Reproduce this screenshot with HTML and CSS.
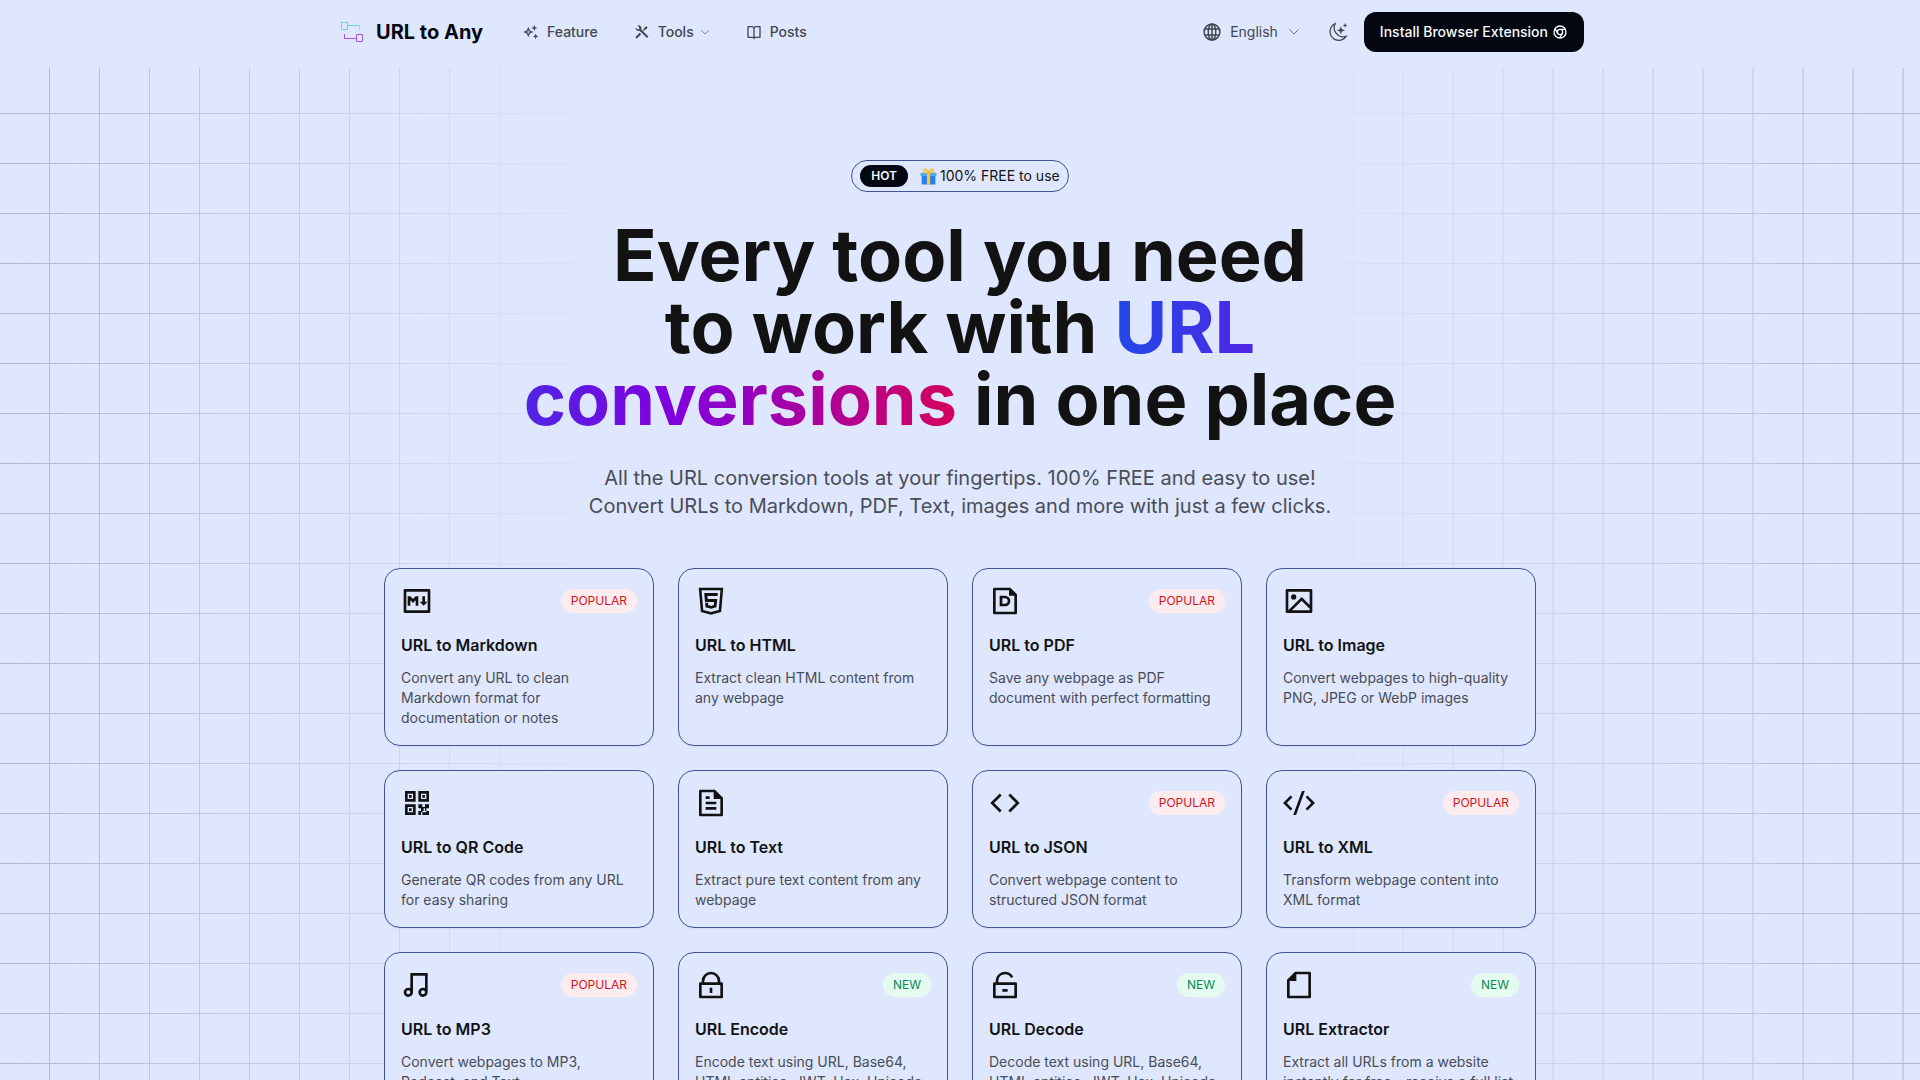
FILE: index.html
```html
<!DOCTYPE html>
<html lang="en">

<head>
    <meta charset="UTF-8">
    <meta name="viewport" content="width=device-width, initial-scale=1.0">
    <title>URL to Any</title>
    <link rel="stylesheet" href="styles.css">
</head>

<body>
    <header class="header">
        <div class="header-inner">
            <a class="brand" href="#">
                <svg class="logo" viewBox="0 0 24 24">
                    <path stroke="#5fdcd3" d="M1.500 2.500h6v7h-6z" />
                    <path stroke="#5fdcd3" d="M7.500 5.500h12" />
                    <path stroke="#8fe3e4" d="M19.500 5.500v5" />
                    <path stroke="#a855d8" d="M16.500 14.500h6v7h-6z" />
                    <path stroke="#a855d8" d="M16.500 18.500h-12v-4.500" />
                </svg>
                <span>URL to Any</span>
            </a>
            <nav class="nav">
                <a href="#feature">
                    <svg viewBox="0 0 24 24"><path d="M17 1.2 18.300 4.700 21.800 6 18.300 7.300 17 10.800 15.700 7.300 12.200 6 15.700 4.700zM19 14.200l1.200 3.100 3.100 1.200-3.100 1.200-1.200 3.100-1.200-3.100-3.100-1.200 3.100-1.200z" /><path fill-rule="evenodd" d="M8 4l2.300 5.700L16 12l-5.700 2.300L8 20l-2.300-5.700L0 12l5.700-2.300zM8 9.200 7.200 11.200 5.200 12l2 .8.8 2 .8-2 2-.8-2-.8z" /></svg>
                    <span>Feature</span>
                </a>
                <button type="button">
                    <svg viewBox="0 0 24 24"><path d="M5.300 2.300a4.500 4.500 0 0 1 5.700 5.900l10.700 10.700-2 2L8.200 10.200a4.500 4.500 0 0 1-5.900-4.900L4.600 7.600A2 2 0 1 0 7.500 4.700zM15.700 5.200l3.200-1.800 1.400 1.400-1.800 3.200-1.700.4-2.200 2.100-1.400-1.400 2.100-2.200zM8.600 13.300l2.100 2.100-5.600 5.600a1.500 1.500 0 0 1-2.200-2.100z" /></svg>
                    <span>Tools</span>
                    <svg class="chevron" viewBox="0 0 24 24"><path d="m3 8 9 8.500L21 8" /></svg>
                </button>
                <a href="#posts">
                    <svg viewBox="0 0 24 24"><path d="M13 21v2h-2v-2H3a1 1 0 0 1-1-1V4a1 1 0 0 1 1-1h6a4 4 0 0 1 3 1.350A4 4 0 0 1 15 3h6a1 1 0 0 1 1 1v16a1 1 0 0 1-1 1zm7-2V5h-5a2 2 0 0 0-2 2v12zm-9 0V7a2 2 0 0 0-2-2H4v14z" /></svg>
                    <span>Posts</span>
                </a>
            </nav>
            <div class="actions">
                <button class="language" type="button">
                    <svg class="globe" viewBox="0 0 24 24"><circle cx="12" cy="12" r="9.500" /><ellipse cx="12" cy="12" rx="4.500" ry="9.500" /><path d="M3.500 8.500h17M3.500 15.500h17M12 2.500v19" /></svg>
                    <span>English</span>
                    <svg class="chevron" viewBox="0 0 24 24"><path d="m3 7 9 9 9-9" /></svg>
                </button>
                <button class="theme" type="button" aria-label="Toggle theme">
                    <svg viewBox="0 0 24 24"><path class="moon" d="M8.500 2A10.500 10.500 0 1 0 21.800 17.200 11 11 0 0 1 8.500 2z" /><path d="M15.500 5l1.300 3.700 3.700 1.300-3.700 1.300-1.300 3.700-1.300-3.700-3.700-1.300 3.700-1.300zM20.500.8l.8 2.400 2.400.8-2.400.8-.8 2.400-.8-2.400-2.400-.8 2.400-.8z" /></svg>
                </button>
                <a class="install" href="#install">
                    <span>Install Browser Extension</span>
                    <svg viewBox="0 0 24 24"><circle cx="12" cy="12" r="9" /><circle cx="12" cy="12" r="4" /><path d="M12 8h8M8.500 14 4.500 7M15.500 14l-4 7" /></svg>
                </a>
            </div>
        </div>
    </header>

    <main class="main">
        <section class="hero">
            <a class="announcement" href="#free">
                <span class="hot">HOT</span>
                <span class="free">
                    <svg class="gift" viewBox="0 0 16 16">
                        <path fill="#2b7fe8" d="M1.500 6.500h13v9h-13z" />
                        <path fill="#50a8f5" d="M.5 4.500h15v3H.5z" />
                        <path fill="#fbc52d" d="M6.500 4.500h3v11h-3z" />
                        <path fill="none" stroke="#f9bd25" stroke-width="1.500" d="M8 4.500C6 0 3 .5 3.500 3c.3 1.500 3 1.500 4.500 1.500 1.500 0 4.200 0 4.500-1.500C13 .5 10 0 8 4.500z" />
                    </svg>
                    <span>100% FREE to use</span>
                </span>
            </a>
            <h1>Every tool you need<br>to work with <span class="highlight">URL conversions</span> in one place</h1>
            <p>All the URL conversion tools at your fingertips. 100% FREE and easy to use!<br>Convert URLs to Markdown, PDF, Text, images and more with just a few clicks.</p>
        </section>

        <section class="tools">
            <a class="card" href="#markdown">
                <div class="card-top">
                    <svg viewBox="0 0 24 24"><path d="M3 3h18a1 1 0 0 1 1 1v16a1 1 0 0 1-1 1H3a1 1 0 0 1-1-1V4a1 1 0 0 1 1-1zm1 2v14h16V5zm3 10.500H5v-7h2l2 2 2-2h2v7h-2v-4l-2 2-2-2zm11-3h2l-3 3-3-3h2v-4h2z" /></svg>
                    <span class="badge popular">POPULAR</span>
                </div>
                <h2>URL to Markdown</h2>
                <p>Convert any URL to clean Markdown format for documentation or notes</p>
            </a>
            <a class="card" href="#html">
                <div class="card-top">
                    <svg viewBox="0 0 24 24"><path fill-rule="evenodd" d="M2.800 2h18.400l-1.600 18.200L12 22.300l-7.600-2.100zM4.900 3.900l1.300 14.800L12 20.300l5.800-1.600 1.300-14.800zM6.900 6h10.200l-.2 2.300H9.300l.2 2.200h7.200l-.6 6.100L12 17.900l-4.100-1.300-.3-3.200h2.200l.1 1.600 2.100.7 2.100-.7.2-2.300H7.500z" /></svg>
                </div>
                <h2>URL to HTML</h2>
                <p>Extract clean HTML content from any webpage</p>
            </a>
            <a class="card" href="#pdf">
                <div class="card-top">
                    <svg viewBox="0 0 24 24"><path d="M5 4v16h14V8h-4V4zM3 3a1 1 0 0 1 1-1h12l5 5v14a1 1 0 0 1-1 1H4a1 1 0 0 1-1-1z" /><path fill-rule="evenodd" d="M8 8h4a4 4 0 0 1 0 8H8zm2 2v4h2a2 2 0 0 0 0-4z" /></svg>
                    <span class="badge popular">POPULAR</span>
                </div>
                <h2>URL to PDF</h2>
                <p>Save any webpage as PDF document with perfect formatting</p>
            </a>
            <a class="card" href="#image">
                <div class="card-top">
                    <svg viewBox="0 0 24 24"><path fill-rule="evenodd" d="M3 3h18a1 1 0 0 1 1 1v16a1 1 0 0 1-1 1H3a1 1 0 0 1-1-1V4a1 1 0 0 1 1-1zm1 2v14L14 9l6 6V5zm16 12.800-6-6L6.800 19H20z" /><circle cx="8" cy="9" r="2" /></svg>
                </div>
                <h2>URL to Image</h2>
                <p>Convert webpages to high-quality PNG, JPEG or WebP images</p>
            </a>
            <a class="card" href="#qr-code">
                <div class="card-top">
                    <svg viewBox="0 0 24 24"><path fill-rule="evenodd" d="M3 3h8v8H3zm2 2v4h4V5zM13 3h8v8h-8zm2 2v4h4V5zM3 13h8v8H3zm2 2v4h4v-4zM6 6h2v2H6zM16 6h2v2h-2zM6 16h2v2H6zM13 13h3v2h2v-2h3v3h-2v2h2v3h-5v-2h-1v2h-2v-3h2v-2h-2zM17 16v2h-1v1h3v-1h-1v-2z" /></svg>
                </div>
                <h2>URL to QR Code</h2>
                <p>Generate QR codes from any URL for easy sharing</p>
            </a>
            <a class="card" href="#text">
                <div class="card-top">
                    <svg viewBox="0 0 24 24"><path d="M21 8v12.990A1 1 0 0 1 20 22H4a1 1 0 0 1-1-1V3a1 1 0 0 1 1-1h11zm-2 1h-5V4H5v16h14zM8 7h3v2H8zm0 4h8v2H8zm0 4h8v2H8z" /></svg>
                </div>
                <h2>URL to Text</h2>
                <p>Extract pure text content from any webpage</p>
            </a>
            <a class="card" href="#json">
                <div class="card-top">
                    <svg viewBox="0 0 24 24"><path d="m23 12-7.070 7.070-1.420-1.410L20.170 12l-5.660-5.660 1.420-1.410zM3.830 12l5.660 5.660-1.420 1.410L1 12l7.070-7.070 1.420 1.410z" /></svg>
                    <span class="badge popular">POPULAR</span>
                </div>
                <h2>URL to JSON</h2>
                <p>Convert webpage content to structured JSON format</p>
            </a>
            <a class="card" href="#xml">
                <div class="card-top">
                    <svg viewBox="0 0 24 24"><path d="m24 12-5.660 5.660-1.410-1.420L21.170 12l-4.240-4.240 1.410-1.420zM2.830 12l4.240 4.240-1.410 1.420L0 12l5.660-5.660 1.410 1.420zM9.790 21H7.660l6.550-18h2.130z" /></svg>
                    <span class="badge popular">POPULAR</span>
                </div>
                <h2>URL to XML</h2>
                <p>Transform webpage content into XML format</p>
            </a>
            <a class="card" href="#mp3">
                <div class="card-top">
                    <svg viewBox="0 0 24 24"><path fill-rule="evenodd" d="M20 3v14.500a3.500 3.500 0 1 1-2-3.160V5H9v12.500a3.500 3.500 0 1 1-2-3.160V3zM5.500 19a1.500 1.500 0 1 0 0-3 1.500 1.500 0 0 0 0 3zm11 0a1.500 1.500 0 1 0 0-3 1.500 1.500 0 0 0 0 3z" /></svg>
                    <span class="badge popular">POPULAR</span>
                </div>
                <h2>URL to MP3</h2>
                <p>Convert webpages to MP3, Podcast, and Text</p>
            </a>
            <a class="card" href="#encode">
                <div class="card-top">
                    <svg viewBox="0 0 24 24"><path d="M19 10h1a1 1 0 0 1 1 1v10a1 1 0 0 1-1 1H4a1 1 0 0 1-1-1V11a1 1 0 0 1 1-1h1V9a7 7 0 0 1 14 0zM5 12v8h14v-8zm6 2h2v4h-2zm6-4V9A5 5 0 0 0 7 9v1z" /></svg>
                    <span class="badge new">NEW</span>
                </div>
                <h2>URL Encode</h2>
                <p>Encode text using URL, Base64, HTML entities, JWT, Hex, Unicode</p>
            </a>
            <a class="card" href="#decode">
                <div class="card-top">
                    <svg viewBox="0 0 24 24"><path d="M7 10h13a1 1 0 0 1 1 1v10a1 1 0 0 1-1 1H4a1 1 0 0 1-1-1V11a1 1 0 0 1 1-1h1V9a7 7 0 0 1 13.260-3.130l-1.790.89A5 5 0 0 0 7 9zm-2 2v8h14v-8zm5 3h4v2h-4z" /></svg>
                    <span class="badge new">NEW</span>
                </div>
                <h2>URL Decode</h2>
                <p>Decode text using URL, Base64, HTML entities, JWT, Hex, Unicode</p>
            </a>
            <a class="card" href="#extractor">
                <div class="card-top">
                    <svg viewBox="0 0 24 24"><path d="M9 2h11a1 1 0 0 1 1 1v18a1 1 0 0 1-1 1H4a1 1 0 0 1-1-1V8zm1 2v5H5v11h14V4z" /></svg>
                    <span class="badge new">NEW</span>
                </div>
                <h2>URL Extractor</h2>
                <p>Extract all URLs from a website instantly for free - receive a full list</p>
            </a>
        </section>
    </main>
</body>

</html>
```
FILE: styles.css
```css
* {
    box-sizing: border-box;
}

html {
    background: #dfe7ff;
}

body {
    margin: 0;
    font-family: Inter, "Liberation Sans", sans-serif;
    color: #121212;
}

a {
    color: inherit;
    text-decoration: none;
}

button {
    padding: 0;
    border: none;
    background: none;
    color: inherit;
    font: inherit;
    cursor: pointer;
}

svg {
    flex-shrink: 0;
    fill: currentColor;
}

/* header */
.header {
    position: relative;
    z-index: 1;
    height: 68px;
    padding: 12px 16px;
    background: #dfe7ff;
}

.header-inner {
    display: flex;
    align-items: center;
    max-width: 1248px;
    height: 40px;
    margin: 0 auto;
}

.brand {
    display: flex;
    align-items: center;
    gap: 12px;
    padding-left: 4px;
    color: #030712;
    font-size: 20px;
    font-weight: 700;
}

.logo {
    width: 24px;
    height: 24px;
    fill: none;
}

.nav {
    display: flex;
    gap: 36px;
    margin-left: 40px;
    color: #41464f;
    font-size: 14px;
    font-weight: 500;
}

.nav a,
.nav button {
    display: flex;
    align-items: center;
    gap: 8px;
}

.nav span,
.language span,
.install span,
.free span {
    padding-bottom: 2px;
}

.nav svg {
    width: 16px;
    height: 16px;
}

.chevron {
    fill: none;
    stroke: #6b7280;
    stroke-width: 2;
}

.nav .chevron {
    width: 10px;
    height: 10px;
    margin-left: -2px;
}

.actions {
    display: flex;
    align-items: center;
    margin-left: auto;
    font-size: 14px;
}

.language {
    display: flex;
    align-items: center;
    gap: 8px;
    color: #41464f;
}

.globe {
    width: 20px;
    height: 20px;
    fill: none;
    stroke: currentColor;
    stroke-width: 1.8;
}

.language .chevron {
    width: 12px;
    height: 12px;
    margin-left: 2px;
}

.theme {
    height: 20px;
    margin: 0 16px 0 28px;
    color: #41464f;
}

.theme svg {
    display: block;
    width: 20px;
    height: 20px;
}

.theme .moon {
    fill: none;
    stroke: currentColor;
    stroke-width: 1.5;
}

.install {
    display: flex;
    align-items: center;
    gap: 4px;
    height: 40px;
    padding: 0 16px;
    border-radius: 12px;
    background: #030712;
    color: #f8fafc;
    font-weight: 500;
}

.install svg {
    width: 16px;
    height: 16px;
    fill: none;
    stroke: currentColor;
    stroke-width: 2;
}

/* grid paper on both sides, fading out to the middle */
.main {
    position: relative;
    padding: 92px 16px 80px;
}

.main::before,
.main::after {
    content: "";
    position: absolute;
    z-index: -1;
    top: -4px;
    bottom: 0;
    width: 33%;
    background-image:
        linear-gradient(to right, transparent 49px, #b0b8cd 49px),
        linear-gradient(to bottom, transparent 49px, #b0b8cd 49px);
    background-size: 50px 50px;
}

.main::before {
    left: 0;
    mask-image: linear-gradient(to right, #000, transparent);
}

.main::after {
    right: 0;
    background-position: right 16px top;
    mask-image: linear-gradient(to left, #000, transparent);
}

/* hero */
.hero {
    text-align: center;
}

.announcement {
    display: inline-flex;
    align-items: center;
    gap: 12px;
    height: 32px;
    padding: 0 8px;
    border: 1px solid #425496;
    border-radius: 16px;
    font-size: 14px;
}

.hot {
    padding: 3px 11px;
    border-radius: 11px;
    background: #030712;
    color: #f8fafc;
    font-size: 12px;
    font-weight: 600;
    line-height: 16px;
}

.free {
    display: flex;
    align-items: center;
    gap: 3px;
}

.gift {
    width: 17px;
    height: 17px;
}

.hero h1 {
    max-width: 896px;
    margin: 27px auto 29px;
    font-size: 72px;
    font-weight: 700;
    line-height: 72px;
}

.highlight {
    background: linear-gradient(to right, #2149e8, #8000e0 50%, #d5005c);
    background-clip: text;
    color: transparent;
}

.hero p {
    margin: 0;
    color: #494d56;
    font-size: 20px;
    line-height: 28px;
}

/* tool cards */
.tools {
    display: grid;
    grid-template-columns: repeat(4, 1fr);
    gap: 24px;
    max-width: 1152px;
    margin: 48px auto 0;
}

.card {
    padding: 16px 16px 17px;
    border: 1px solid #425496;
    border-radius: 16px;
    background: #dfe7ff;
    box-shadow: 0 1px 2px rgba(0, 0, 0, 0.05);
}

.card-top {
    display: flex;
    align-items: center;
    justify-content: space-between;
}

.card-top svg {
    width: 32px;
    height: 32px;
}

.badge {
    padding: 4px 10px;
    border-radius: 12px;
    font-size: 12px;
    line-height: 16px;
}

.popular {
    background: #fdeced;
    color: #d3121f;
}

.new {
    background: #e6fbf0;
    color: #098a52;
}

.card h2 {
    margin: 16px 0 11px;
    font-size: 16px;
    font-weight: 600;
    line-height: 24px;
}

.card p {
    margin: 0;
    color: #494d56;
    font-size: 14px;
    line-height: 20px;
}

@media screen and (max-width: 1024px) {
    .nav {
        display: none;
    }

    .tools {
        grid-template-columns: repeat(2, 1fr);
    }

    .hero h1 {
        font-size: 48px;
        line-height: 48px;
    }
}
```
